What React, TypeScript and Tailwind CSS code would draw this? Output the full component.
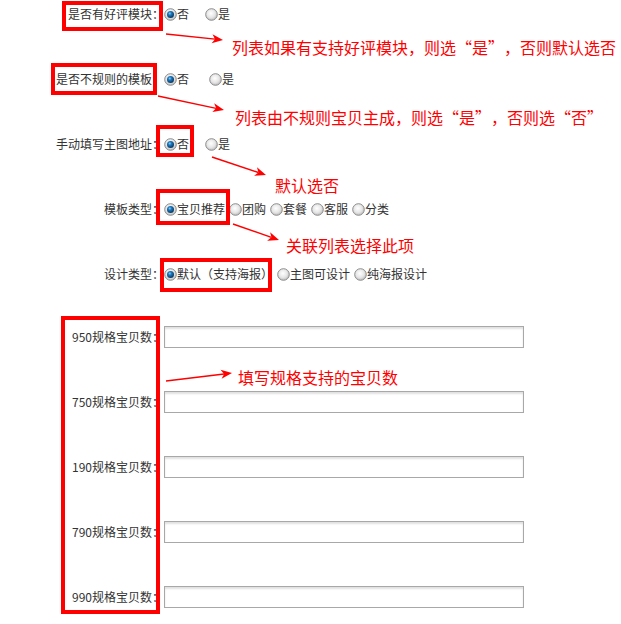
import React from "react";

const FONT = { fontFamily: '"Noto Sans CJK SC", "Noto Sans", sans-serif' };

function Radio({ checked = false, className = "" }: { checked?: boolean; className?: string }) {
  return (
    <svg width="13" height="13" viewBox="0 0 13 13" className={"shrink-0 " + className}>
      <defs>
        <radialGradient id="rg-off" cx="45%" cy="40%" r="60%">
          <stop offset="0%" stopColor="#ffffff" />
          <stop offset="60%" stopColor="#e6e6e6" />
          <stop offset="100%" stopColor="#bdbdbd" />
        </radialGradient>
        <radialGradient id="rg-on" cx="40%" cy="35%" r="65%">
          <stop offset="0%" stopColor="#8fd0ff" />
          <stop offset="35%" stopColor="#1f7cc0" />
          <stop offset="100%" stopColor="#083660" />
        </radialGradient>
      </defs>
      <circle cx="6.5" cy="6.5" r="5.8" fill="url(#rg-off)" stroke="#8c8c8c" strokeWidth="1" />
      {checked && <circle cx="6.5" cy="6.5" r="3.5" fill="url(#rg-on)" />}
    </svg>
  );
}

function Arrow({ x1, y1, x2, y2 }: { x1: number; y1: number; x2: number; y2: number }) {
  const dx = x2 - x1;
  const dy = y2 - y1;
  const len = Math.sqrt(dx * dx + dy * dy);
  const ux = dx / len;
  const uy = dy / len;
  const hl = 11;
  const hw = 4.5;
  const bx = x2 - ux * hl;
  const by = y2 - uy * hl;
  const nx = -uy;
  const ny = ux;
  const pts = `${x2},${y2} ${bx + nx * hw},${by + ny * hw} ${bx + ux * 3},${by + uy * 3} ${bx - nx * hw},${by - ny * hw}`;
  return (
    <g>
      <line x1={x1} y1={y1} x2={bx + ux * 3} y2={by + uy * 3} stroke="#ff0000" strokeWidth="1.4" />
      <polygon points={pts} fill="#ff0000" />
    </g>
  );
}

function Label({ children, className = "" }: { children: React.ReactNode; className?: string }) {
  return <div className={"w-[164px] shrink-0 text-right whitespace-nowrap " + className}>{children}</div>;
}

function Opt({ checked = false, text, className = "" }: { checked?: boolean; text: string; className?: string }) {
  return (
    <>
      <Radio checked={checked} className={className} />
      <span className="whitespace-nowrap">{text}</span>
    </>
  );
}

function InputRow({ num, className = "" }: { num: string; className?: string }) {
  return (
    <div className={"flex h-[28px] items-center " + className}>
      <Label>{num}规格宝贝数：</Label>
      <div className="h-[22px] w-[360px] border border-[#a8a8a8] bg-white shadow-[inset_0_2px_2px_rgba(0,0,0,0.12)]" />
    </div>
  );
}

function Q({ word }: { word: string }) {
  return (
    <>
      <span className="inline-block w-[16px] text-right">“</span>
      {word}
      <span className="inline-block w-[16px] text-left">”</span>
    </>
  );
}

export default function App() {
  return (
    <div lang="zh-CN" className="relative h-[624px] w-[621px] overflow-hidden bg-white text-[12px] leading-[14px] text-[#333333]" style={FONT}>
      <div className="flex flex-col">
        <div className="flex h-[28px] items-center">
          <Label>是否有好评模块：</Label>
          <Opt checked text="否" />
          <Opt text="是" className="ml-[16px]" />
        </div>
        <div className="mt-[37px] flex h-[28px] items-center">
          <Label className="pr-[12px]">是否不规则的模板</Label>
          <Opt checked text="否" />
          <Opt text="是" className="ml-[20px]" />
        </div>
        <div className="mt-[37px] flex h-[28px] items-center">
          <Label>手动填写主图地址：</Label>
          <Opt checked text="否" />
          <Opt text="是" className="ml-[16px]" />
        </div>
        <div className="mt-[37px] flex h-[28px] items-center">
          <Label>模板类型：</Label>
          <Opt checked text="宝贝推荐" />
          <Opt text="团购" className="ml-[4px]" />
          <Opt text="套餐" className="ml-[4px]" />
          <Opt text="客服" className="ml-[4px]" />
          <Opt text="分类" className="ml-[4px]" />
        </div>
        <div className="mt-[37px] flex h-[28px] items-center">
          <Label>设计类型：</Label>
          <Opt checked text="默认（支持海报）" />
          <Opt text="主图可设计" className="ml-[4px]" />
          <Opt text="纯海报设计" className="ml-[4px]" />
        </div>
        <InputRow num="950" className="mt-[35px]" />
        <InputRow num="750" className="mt-[37px]" />
        <InputRow num="190" className="mt-[37px]" />
        <InputRow num="790" className="mt-[37px]" />
        <InputRow num="990" className="mt-[37px]" />
      </div>

      {/* annotation boxes */}
      <div className="pointer-events-none absolute left-[62px] top-[1px] h-[30px] w-[101px] border-[4px] border-[#ff0000]" />
      <div className="pointer-events-none absolute left-[51px] top-[63px] h-[32px] w-[106px] border-[4px] border-[#ff0000]" />
      <div className="pointer-events-none absolute left-[156px] top-[125px] h-[32px] w-[38px] border-[4px] border-[#ff0000]" />
      <div className="pointer-events-none absolute left-[156px] top-[189px] h-[36px] w-[74px] border-[4px] border-[#ff0000]" />
      <div className="pointer-events-none absolute left-[160px] top-[258px] h-[34px] w-[112px] border-[4px] border-[#ff0000]" />
      <div className="pointer-events-none absolute left-[61px] top-[316px] h-[298px] w-[99px] border-[4px] border-[#ff0000]" />

      {/* annotation texts */}
      <div className="absolute left-[232px] top-[39px] whitespace-nowrap text-[16px] leading-[16px] text-[#ff0000]">
        列表如果有支持好评模块，则选<Q word="是" />，否则默认选否
      </div>
      <div className="absolute left-[235px] top-[109px] whitespace-nowrap text-[16px] leading-[16px] text-[#ff0000]">
        列表由不规则宝贝主成，则选<Q word="是" />，否则选<Q word="否" />
      </div>
      <div className="absolute left-[275px] top-[177px] whitespace-nowrap text-[16px] leading-[16px] text-[#ff0000]">默认选否</div>
      <div className="absolute left-[286px] top-[237px] whitespace-nowrap text-[16px] leading-[16px] text-[#ff0000]">关联列表选择此项</div>
      <div className="absolute left-[238px] top-[369px] whitespace-nowrap text-[16px] leading-[16px] text-[#ff0000]">填写规格支持的宝贝数</div>

      {/* arrows */}
      <svg className="pointer-events-none absolute left-0 top-0" width="621" height="624" viewBox="0 0 621 624">
        <Arrow x1={166} y1={34} x2={223} y2={40} />
        <Arrow x1={158} y1={96} x2={224} y2={110} />
        <Arrow x1={212} y1={157} x2={266} y2={175} />
        <Arrow x1={233} y1={224} x2={279} y2={240} />
        <Arrow x1={166} y1={381} x2={232} y2={373} />
      </svg>
    </div>
  );
}
